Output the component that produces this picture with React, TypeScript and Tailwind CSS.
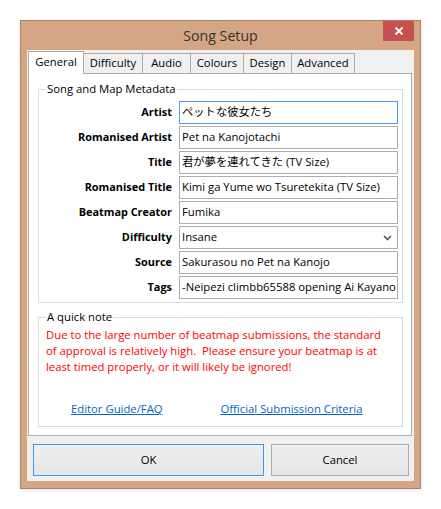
import React from "react";

const FONT = { fontFamily: '"Open Sans", "Noto Sans CJK JP", sans-serif' };

function Field({ label, value, focused }: { label: string; value: string; focused?: boolean }) {
  return (
    <div className="flex items-center h-[23px]">
      <div className="w-[133px] text-right font-bold text-[10.9px] text-black whitespace-nowrap">{label}</div>
      <div
        className={
          "ml-[7px] w-[219px] h-[23px] border bg-white flex items-center pl-[2px] overflow-hidden whitespace-nowrap text-[11.3px] text-black " +
          (focused ? "border-[#569de5]" : "border-[#abadb3]")
        }
      >
        {value}
      </div>
    </div>
  );
}

function SelectField({ label, value }: { label: string; value: string }) {
  return (
    <div className="flex items-center h-[23px]">
      <div className="w-[133px] text-right font-bold text-[10.9px] text-black whitespace-nowrap">{label}</div>
      <div className="ml-[7px] w-[219px] h-[23px] border border-[#abadb3] bg-white flex items-center pl-[2px] pr-[5px] text-[11.3px] text-black">
        <span className="flex-1">{value}</span>
        <svg width="9" height="6" viewBox="0 0 9 6">
          <path d="M1 1 L4.5 4.5 L8 1" stroke="#5a5a5a" strokeWidth="1.7" fill="none" />
        </svg>
      </div>
    </div>
  );
}

const tabs = [
  { name: "General", w: "w-[56px]" },
  { name: "Difficulty", w: "w-[60px]" },
  { name: "Audio", w: "w-[49px]" },
  { name: "Colours", w: "w-[54px]" },
  { name: "Design", w: "w-[49px]" },
  { name: "Advanced", w: "w-[64px]" },
];

export default function App() {
  return (
    <div className="w-[441px] h-[509px] bg-white pt-[20px] pl-[20px]" style={FONT}>
      <div className="w-[401px] h-[469px] border border-[#a9856b] bg-[#d5a686] px-[6px] pb-[7px] flex flex-col shadow-[0_1px_4px_rgba(0,0,0,0.12)]">
        {/* title bar */}
        <div className="h-[29px] grid grid-cols-[31px_1fr_31px]">
          <div />
          <div className="text-center text-[14.2px] leading-[29px] text-[#333333]">Song Setup</div>
          <div className="h-[20px] bg-[#c75050] flex items-center justify-center">
            <svg width="10" height="10" viewBox="0 0 10 10">
              <path d="M1.5 1.5 L8.5 8.5 M8.5 1.5 L1.5 8.5" stroke="#ffffff" strokeWidth="1.8" />
            </svg>
          </div>
        </div>
        {/* client */}
        <div className="h-[431px] bg-[#f0f0f0] pt-[1px] pl-[1px] flex flex-col">
          {/* tab strip */}
          <div className="h-[22px] flex items-end">
            {tabs.map((t, i) =>
              i === 0 ? (
                <div
                  key={t.name}
                  className={t.w + " h-[23px] -mb-px relative z-10 bg-white border-l border-t border-r border-[#acacac] text-[11.3px] text-black flex items-start justify-center pt-[2px]"}
                >
                  {t.name}
                </div>
              ) : (
                <div
                  key={t.name}
                  className={t.w + " -ml-px h-[20px] bg-[#f0f0f0] border-l border-t border-r border-[#acacac] text-[11.3px] text-black flex items-center justify-center"}
                >
                  {t.name}
                </div>
              )
            )}
          </div>
          {/* panel */}
          <div className="w-[384px] h-[363px] border border-[#acacac] bg-white pt-[7px] pl-[9px] pr-[8px] flex flex-col">
            <fieldset className="border border-[#dcdcdc] h-[222px]">
              <legend className="ml-[7px] px-[1px] text-[11.3px] leading-[16px] text-black">Song and Map Metadata</legend>
              <div className="pt-[4px] flex flex-col gap-[2px]">
                <Field label="Artist" value="ペットな彼女たち" focused />
                <Field label="Romanised Artist" value="Pet na Kanojotachi" />
                <Field label="Title" value="君が夢を連れてきた (TV Size)" />
                <Field label="Romanised Title" value="Kimi ga Yume wo Tsuretekita (TV Size)" />
                <Field label="Beatmap Creator" value="Fumika" />
                <SelectField label="Difficulty" value="Insane" />
                <Field label="Source" value="Sakurasou no Pet na Kanojo" />
                <Field label="Tags" value="-Neipezi climbb65588 opening Ai Kayano Kana Hanazawa" />
              </div>
            </fieldset>
            <fieldset className="mt-[6px] border border-[#dcdcdc] h-[118px]">
              <legend className="ml-[7px] px-[1px] text-[11.3px] leading-[16px] text-black">A quick note</legend>
              <div className="pt-[2px] pl-[7px] text-[11.3px] leading-[16px] text-[#ff0000] whitespace-pre">
                {"Due to the large number of beatmap submissions, the standard\nof approval is relatively high.  Please ensure your beatmap is at\nleast timed properly, or it will likely be ignored!"}
              </div>
              <div className="mt-[26px] flex text-[11.3px] leading-[16px] text-[#0066cc]">
                <span className="ml-[32px] underline">Editor Guide/FAQ</span>
                <span className="ml-[58px] underline">Official Submission Criteria</span>
              </div>
            </fieldset>
          </div>
          {/* buttons */}
          <div className="mt-[8px] pl-[5px] flex gap-[7px]">
            <div className="w-[231px] h-[32px] border border-[#3399ff] bg-gradient-to-b from-[#f0f0f0] to-[#e5e5e5] flex items-center justify-center text-[11.3px] text-black">
              OK
            </div>
            <div className="w-[138px] h-[32px] border border-[#acacac] bg-gradient-to-b from-[#f0f0f0] to-[#e5e5e5] flex items-center justify-center text-[11.3px] text-black">
              Cancel
            </div>
          </div>
        </div>
      </div>
    </div>
  );
}
